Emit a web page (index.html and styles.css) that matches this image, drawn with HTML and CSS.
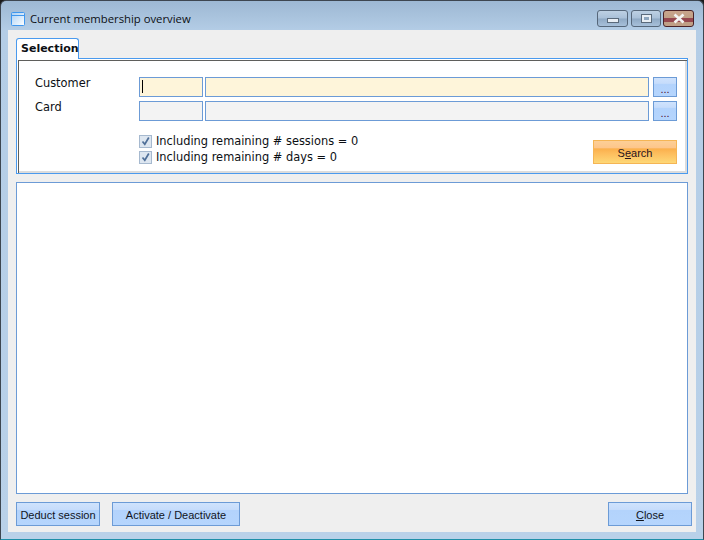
FILE: index.html
```html
<!DOCTYPE html>
<html lang="en">
<head>
    <meta charset="UTF-8">
    <title>Current membership overview</title>
    <link rel="stylesheet" href="styles.css">
</head>
<body>
    <div class="window">
        <div class="titlebar">
            <svg class="app-icon" width="16" height="16" viewBox="0 0 16 16">
                <defs>
                    <linearGradient id="pane" x1="0" y1="0" x2="1" y2="1">
                        <stop offset="0" stop-color="#a9d0f5"/>
                        <stop offset="1" stop-color="#ffffff"/>
                    </linearGradient>
                </defs>
                <rect x="1.5" y="1.5" width="13" height="13" rx="1" fill="url(#pane)" stroke="#3f97ee"/>
                <path d="M2 4.5h12" stroke="#3f97ee"/>
            </svg>
            <span class="title">Current membership overview</span>
            <div class="caption-buttons">
                <div class="caption-btn min"><span class="glyph-min"></span></div>
                <div class="caption-btn max"><span class="glyph-max"></span></div>
                <div class="caption-btn close-x">
                    <svg width="14" height="11" viewBox="0 0 14 11">
                        <path d="M2.5 1.5l9 8M11.5 1.5l-9 8" stroke="#f4f4f4" stroke-width="2.6"/>
                    </svg>
                </div>
            </div>
        </div>
        <div class="client">
            <div class="tabs">
                <div class="tab">Selection</div>
            </div>
            <div class="panel">
                <div class="fields">
                    <div class="row">
                        <label class="row-label">Customer</label>
                        <div class="input short required"><span class="caret"></span></div>
                        <div class="input wide required"></div>
                        <button class="btn dots">...</button>
                    </div>
                    <div class="row">
                        <label class="row-label">Card</label>
                        <div class="input short"></div>
                        <div class="input wide"></div>
                        <button class="btn dots">...</button>
                    </div>
                </div>
                <div class="options">
                    <div class="checks">
                        <div class="check-row">
                            <span class="check"><svg width="11" height="11" viewBox="0 0 11 11"><path d="M2.5 5.5l2.3 2.8L8.8 1.5" fill="none" stroke="#4f6f98" stroke-width="1.7"/></svg></span>
                            <span>Including remaining # sessions = 0</span>
                        </div>
                        <div class="check-row">
                            <span class="check"><svg width="11" height="11" viewBox="0 0 11 11"><path d="M2.5 5.5l2.3 2.8L8.8 1.5" fill="none" stroke="#4f6f98" stroke-width="1.7"/></svg></span>
                            <span>Including remaining # days = 0</span>
                        </div>
                    </div>
                    <button class="btn search">S<u>e</u>arch</button>
                </div>
            </div>
            <div class="listbox"></div>
            <div class="footer">
                <button class="btn deduct">Deduct session</button>
                <button class="btn activate">Activate / Deactivate</button>
                <button class="btn close"><u>C</u>lose</button>
            </div>
        </div>
    </div>
</body>
</html>
```

FILE: styles.css
```css
html, body {
    margin: 0;
    height: 100%;
    background: #1a1a1a;
}

.window {
    box-sizing: border-box;
    width: 704px;
    height: 540px;
    display: flex;
    flex-direction: column;
    border: 1px solid #3d4650;
    border-bottom-color: #1f8fa8;
    border-radius: 6px 6px 0 0;
    background: linear-gradient(#9db8d3 0, #b4cde6 30px, #b9d1e9 100%);
    padding: 0 7px 7px;
}

.titlebar {
    box-sizing: border-box;
    height: 29px;
    display: flex;
    align-items: center;
    padding: 9px 2px 3px 2px;
}

.app-icon {
    margin-right: 4px;
}

.title {
    font-family: "Open Sans", sans-serif;
    font-size: 11.3px;
    color: #0c0f14;
    flex: 1;
}

.caption-buttons {
    display: flex;
    gap: 2px;
}

.caption-btn {
    box-sizing: border-box;
    height: 17px;
    width: 30px;
    display: flex;
    align-items: center;
    justify-content: center;
    border: 1px solid #56677a;
    border-radius: 3px;
    background: linear-gradient(#bdd0e3 0, #a9c0d8 48%, #8fa9c4 52%, #a7c0da 100%);
}

.min {
    width: 31px;
    margin-right: 1px;
}

.close-x {
    width: 31px;
    border-color: #4a2226;
    background: linear-gradient(#c9a48c 0, #c0a086 46%, #96474f 48%, #96474f 72%, #c09f86 74%);
}

.glyph-min {
    width: 10px;
    height: 3px;
    margin-top: 3px;
    background: #e8eef4;
    border: 1px solid #5a6a7b;
}

.glyph-max {
    box-sizing: border-box;
    width: 9px;
    height: 7px;
    background: #8ea6be;
    border: 2px solid #e8eef4;
    outline: 1px solid #5a6a7b;
}

.client {
    flex: 1;
    display: flex;
    flex-direction: column;
    background: #efefef;
    padding: 8px 4px 6px 8px;
}

.tabs {
    display: flex;
    height: 20px;
}

.tab {
    box-sizing: border-box;
    width: 63px;
    height: 21px;
    position: relative;
    z-index: 1;
    background: #ffffff;
    border: 1px solid #4a9aee;
    border-bottom: none;
    border-radius: 3px 3px 0 0;
    font-family: "DejaVu Sans", sans-serif;
    font-size: 11px;
    font-weight: bold;
    line-height: 20px;
    padding-left: 4px;
    color: #0c0f14;
}

.panel {
    box-sizing: border-box;
    width: 672px;
    height: 116px;
    background: #ffffff;
    border: 1px solid #4a9aee;
    box-shadow: inset 1px 1px 0 #ffffff, inset 2px 2px 0 #5f5f5c, inset -2px -2px 0 #dcdcdc;
    padding: 18px 10px 0 18px;
}

.fields {
    display: flex;
    flex-direction: column;
    gap: 4px;
}

.row {
    display: flex;
    height: 20px;
}

.row-label {
    width: 104px;
    font-family: "DejaVu Sans", sans-serif;
    font-size: 11.4px;
    line-height: 13px;
    color: #0c0f14;
}

.input {
    box-sizing: border-box;
    height: 20px;
    background: #f3f3f3;
    border: 1px solid #6c9bd6;
    margin-right: 2px;
}

.required {
    background: #fef5da;
}

.short {
    width: 64px;
}

.wide {
    width: 444px;
    margin-right: 4px;
}

.caret {
    display: block;
    width: 1px;
    height: 13px;
    margin: 2px 0 0 2px;
    background: #000000;
}

.btn {
    box-sizing: border-box;
    height: 24px;
    padding: 2px 0 0;
    border: 1px solid #6c9bd6;
    background: linear-gradient(#cfe3fd 0, #c6dcfb 30%, #b3d3fc 34%, #b5d5fd 100%);
    font-family: "Liberation Sans", sans-serif;
    font-size: 11px;
    white-space: nowrap;
    color: #10141c;
}

.dots {
    width: 24px;
    height: 20px;
    color: #4a1030;
    padding-top: 3px;
}

.options {
    display: flex;
    justify-content: space-between;
    margin-top: 12px;
}

.checks {
    margin-left: 104px;
    font-family: "DejaVu Sans", sans-serif;
    font-size: 11.4px;
    color: #0c0f14;
}

.check-row {
    display: flex;
    align-items: center;
    height: 16px;
    gap: 4px;
}

.check {
    box-sizing: border-box;
    width: 13px;
    height: 13px;
    display: flex;
    align-items: center;
    justify-content: center;
    border: 1px solid #a6b9cf;
    background: #dde6f0;
}

.search {
    width: 84px;
    margin-top: 7px;
    border-color: #f5b555;
    background: linear-gradient(#fdcf96 0, #fdc68b 30%, #fbb04c 36%, #fdbc5c 55%, #fed877 100%);
    color: #2a1420;
}

.listbox {
    box-sizing: border-box;
    width: 672px;
    height: 312px;
    margin-top: 8px;
    background: #ffffff;
    border: 1px solid #6c9bd6;
}

.footer {
    display: flex;
    margin-top: 8px;
    width: 676px;
}

.deduct {
    width: 84px;
}

.activate {
    width: 128px;
    margin-left: 12px;
}

.close {
    width: 84px;
    margin-left: auto;
}
```
